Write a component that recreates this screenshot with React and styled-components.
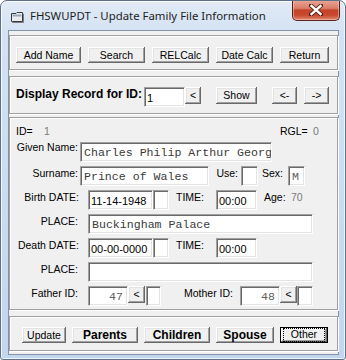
import React from 'react';
import styled, { createGlobalStyle } from 'styled-components';

const Global = createGlobalStyle`
  html, body { margin: 0; padding: 0; background: #ffffff; }
  body { width: 346px; height: 360px; overflow: hidden; font-family: "Liberation Sans", Arial, sans-serif; }
  * { box-sizing: border-box; }
`;

const Window = styled.div`
  width: 346px;
  height: 360px;
  border: 1px solid #5f7089;
  border-radius: 7px 7px 3px 3px;
  background: linear-gradient(180deg, #e2ebf6 0px, #d4e2f3 30px, #c2d6ee 100%);
  box-shadow: inset 0 0 0 1px rgba(255, 255, 255, 0.75);
  display: flex;
  flex-direction: column;
  overflow: hidden;
`;

const TitleBar = styled.div`
  height: 29px;
  flex-shrink: 0;
  display: flex;
  align-items: flex-start;
`;

const IconBox = styled.div`
  margin: 10px 0 0 10px;
  width: 13px;
  height: 12px;
  display: flex;
`;

const Title = styled.div`
  margin: 7px 0 0 6px;
  font-family: "Noto Sans", "Liberation Sans", sans-serif;
  font-size: 11.4px;
  line-height: 16px;
  color: #1e1e1e;
  white-space: nowrap;
`;

const CloseButton = styled.div`
  margin: -1px 5px 0 auto;
  width: 48px;
  height: 21px;
  border: 1px solid #5a2119;
  border-top: none;
  border-radius: 0 0 5px 5px;
  background: linear-gradient(180deg, #e9a898 0%, #da7c67 42%, #c3432b 50%, #c8482f 75%, #e2876f 100%);
  box-shadow: inset 0 0 0 1px rgba(255, 220, 210, 0.45);
  display: flex;
  align-items: center;
  justify-content: center;
`;

const Client = styled.div`
  margin: 0 0 0 7px;
  width: 331px;
  height: 325px;
  background: #f0f0f0;
  border: 1px solid #8493a8;
  display: flex;
  flex-direction: column;
  padding-top: 4px;
`;

const Panel = styled.div`
  height: ${p => p.$h}px;
  margin-top: ${p => p.$mt || 0}px;
  border: 1px solid #a0a0a0;
  box-shadow: inset 1px 1px 0 #ffffff, 1px 1px 0 #ffffff;
  display: flex;
  flex-direction: column;
  padding: ${p => p.$pt || 0}px 0 0 ${p => p.$pl || 0}px;
`;

const Row = styled.div`
  display: flex;
  align-items: flex-start;
  height: ${p => p.$h || 20}px;
  margin-top: ${p => p.$mt || 0}px;
  gap: ${p => p.$gap || 0}px;
`;

const Btn = styled.div`
  width: ${p => p.$w}px;
  height: ${p => p.$h || 16}px;
  margin-left: ${p => p.$ml || 0}px;
  flex-shrink: 0;
  background: #f0f0f0;
  box-shadow: inset -1px -1px 0 #696969, inset 1px 1px 0 #ffffff, inset -2px -2px 0 #a0a0a0, inset 2px 2px 0 #e3e3e3;
  display: flex;
  align-items: center;
  justify-content: center;
  font-size: ${p => (p.$bold ? 12 : 10.5)}px;
  font-weight: ${p => (p.$bold ? 'bold' : 'normal')};
  color: #000;
  white-space: nowrap;
  padding-bottom: 1px;
`;

const DefaultBtn = styled(Btn)`
  border: 1px solid #000;
  box-shadow: inset -1px -1px 0 #696969, inset 1px 1px 0 #ffffff, inset -2px -2px 0 #a0a0a0;
`;

const Focus = styled.span`
  width: 40px;
  height: 12px;
  outline: 1px dotted #000;
  display: flex;
  align-items: center;
  justify-content: center;
  line-height: 11px;
`;

const Label = styled.div`
  width: ${p => p.$w}px;
  margin-left: ${p => p.$ml || 0}px;
  margin-top: ${p => p.$mt || 0}px;
  padding-right: ${p => p.$pr || 0}px;
  flex-shrink: 0;
  font-size: ${p => (p.$bold ? 12 : 10.5)}px;
  font-weight: ${p => (p.$bold ? 'bold' : 'normal')};
  line-height: 13px;
  text-align: ${p => (p.$right ? 'right' : 'left')};
  color: ${p => (p.$dim ? '#7a7a7a' : '#000')};
  white-space: nowrap;
`;

const Field = styled.div`
  width: ${p => p.$w}px;
  height: ${p => p.$h || 20}px;
  margin-left: ${p => p.$ml || 0}px;
  flex-shrink: 0;
  background: #ffffff;
  border-top: 1px solid #a0a0a0;
  border-left: 1px solid #a0a0a0;
  border-bottom: 1px solid #ffffff;
  border-right: 1px solid #ffffff;
  box-shadow: inset 1px 1px 0 #696969, inset -1px -1px 0 #e3e3e3;
  display: flex;
  align-items: center;
  justify-content: ${p => (p.$right ? 'flex-end' : 'flex-start')};
  padding: 1px ${p => (p.$right ? 4 : 0)}px 0 ${p => (p.$mono ? 3 : 2)}px;
  overflow: hidden;
  white-space: nowrap;
  font-family: ${p => (p.$mono ? '"Liberation Mono", "Courier New", monospace' : '"Liberation Sans", Arial, sans-serif')};
  font-size: ${p => (p.$mono ? 11.6 : 11)}px;
  color: ${p => (p.$dim ? '#606060' : p.$mono ? '#3a3a3a' : '#000')};
`;

const AppIcon = () => (
  <svg width="13" height="12" viewBox="0 0 13 12">
    <path d="M0.5 2.5 H5 L6 1.5 H11.5 V10.5 H0.5 Z" fill="#e8ecef" stroke="#3a3a3a" />
    <rect x="1.5" y="3.5" width="9" height="2" fill="#9aa8b8" />
    <path d="M11.5 3 H12.5 V11.5 H1.5 V10.5" fill="none" stroke="#7a7a7a" />
  </svg>
);

const CloseX = () => (
  <svg width="14" height="12" viewBox="0 0 14 12">
    <path d="M2 1.5 L12 10.5 M12 1.5 L2 10.5" stroke="#4a1a12" strokeWidth="4" strokeLinecap="square" />
    <path d="M2.5 2 L11.5 10 M11.5 2 L2.5 10" stroke="#ffffff" strokeWidth="2.4" strokeLinecap="square" />
  </svg>
);

export default function App() {
  return (
    <>
      <Global />
      <Window>
        <TitleBar>
          <IconBox><AppIcon /></IconBox>
          <Title>FHSWUPDT - Update Family File Information</Title>
          <CloseButton><CloseX /></CloseButton>
        </TitleBar>
        <Client>
          <Panel $h={35} $pt={11} $pl={6}>
            <Row $h={16} $gap={7}>
              <Btn $w={65}>Add Name</Btn>
              <Btn $w={57}>Search</Btn>
              <Btn $w={57}>RELCalc</Btn>
              <Btn $w={57}>Date Calc</Btn>
              <Btn $w={49}>Return</Btn>
            </Row>
          </Panel>

          <Panel $h={38} $mt={6} $pt={10} $pl={6}>
            <Row $h={20}>
              <Label $w={128} $bold $mt={1}>Display Record for ID:</Label>
              <Field $w={41}>1</Field>
              <Btn $w={16} $h={17}>&lt;</Btn>
              <Btn $w={41} $h={17} $ml={15}>Show</Btn>
              <Btn $w={25} $h={17} $ml={15}>&lt;-</Btn>
              <Btn $w={25} $h={17} $ml={7}>-&gt;</Btn>
            </Row>
          </Panel>

          <Panel $h={193} $mt={3} $pt={7}>
            <Row $h={13}>
              <Label $w={28} $ml={6}>ID=</Label>
              <Label $w={236} $dim>1</Label>
              <Label $w={33}>RGL=</Label>
              <Label $w={10} $dim>0</Label>
            </Row>
            <Row $mt={4}>
              <Label $w={68} $right $mt={-1}>Given Name:</Label>
              <Field $w={192} $ml={2} $mono>Charles Philip Arthur George</Field>
            </Row>
            <Row $mt={4}>
              <Label $w={68} $right $mt={1}>Surname:</Label>
              <Field $w={129} $ml={2} $mono>Prince of Wales</Field>
              <Label $w={30} $right $pr={1} $mt={1}>Use:</Label>
              <Field $w={17} $ml={2} />
              <Label $w={27} $right $pr={2} $mt={1}>Sex:</Label>
              <Field $w={17} $ml={3} $mono $dim>M</Field>
            </Row>
            <Row $mt={4}>
              <Label $w={69} $right $mt={1}>Birth DATE:</Label>
              <Field $w={65} $ml={9}>11-14-1948</Field>
              <Field $w={16} />
              <Label $w={40} $ml={7} $mt={1}>TIME:</Label>
              <Field $w={41}>00:00</Field>
              <Label $w={27} $ml={7} $mt={1}>Age:</Label>
              <Label $w={20} $dim $mt={1}>70</Label>
            </Row>
            <Row $mt={4}>
              <Label $w={68} $right $mt={1}>PLACE:</Label>
              <Field $w={225} $ml={10} $mono>Buckingham Palace</Field>
            </Row>
            <Row $mt={4}>
              <Label $w={69} $right $mt={1}>Death DATE:</Label>
              <Field $w={65} $ml={9}>00-00-0000</Field>
              <Field $w={16} />
              <Label $w={40} $ml={7} $mt={1}>TIME:</Label>
              <Field $w={41}>00:00</Field>
            </Row>
            <Row $mt={4}>
              <Label $w={68} $right $mt={1}>PLACE:</Label>
              <Field $w={225} $ml={10} $mono />
            </Row>
            <Row $mt={4}>
              <Label $w={68} $right $mt={1}>Father ID:</Label>
              <Field $w={40} $ml={10} $mono $right $dim>47</Field>
              <Btn $w={17} $h={17}>&lt;</Btn>
              <Field $w={15} $ml={1} />
              <Label $w={72} $right $mt={1}>Mother ID:</Label>
              <Field $w={40} $ml={7} $mono $right $dim>48</Field>
              <Btn $w={17} $h={17}>&lt;</Btn>
              <Field $w={16} />
            </Row>
          </Panel>

          <Panel $h={35} $mt={6} $pt={10} $pl={12}>
            <Row $h={16} $gap={6}>
              <Btn $w={44}>Update</Btn>
              <Btn $w={66} $bold>Parents</Btn>
              <Btn $w={66} $bold>Children</Btn>
              <Btn $w={58} $bold>Spouse</Btn>
              <DefaultBtn $w={48}><Focus>Other</Focus></DefaultBtn>
            </Row>
          </Panel>
        </Client>
      </Window>
    </>
  );
}
